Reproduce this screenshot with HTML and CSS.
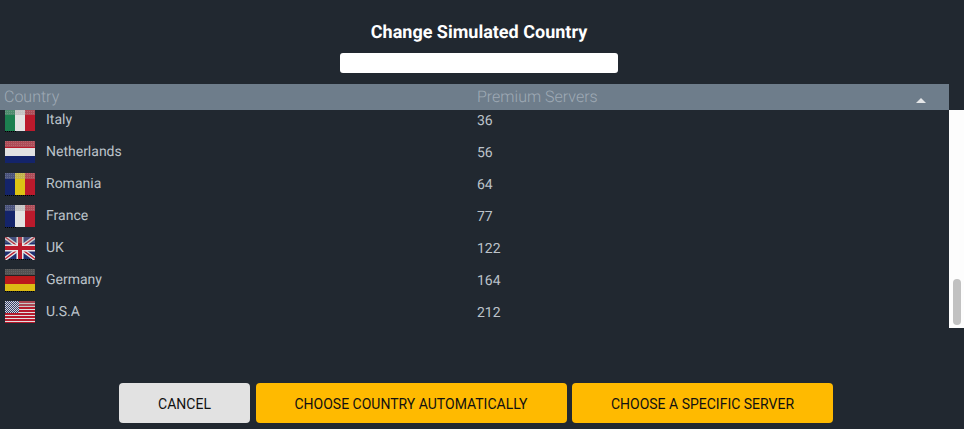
FILE: index.html
```html
<!DOCTYPE html>
<html lang="en">
<head>
<meta charset="utf-8">
<title>Change Simulated Country</title>
<link rel="stylesheet" href="styles.css">
</head>
<body>
<svg class="defs" width="0" height="0" aria-hidden="true">
  <defs>
    <pattern id="dots" width="2" height="2" patternUnits="userSpaceOnUse"><rect width="1" height="1" fill="#fff"/></pattern>
    <pattern id="edge" width="2" height="2" patternUnits="userSpaceOnUse"><rect width="1" height="1" fill="#000"/></pattern>
    <pattern id="canton" width="2" height="2" patternUnits="userSpaceOnUse"><rect width="2" height="2" fill="#33416f"/><rect width="1" height="1" fill="#d8d8d8"/><rect x="1" y="1" width="1" height="1" fill="#d8d8d8"/></pattern>
  </defs>
</svg>
<main class="dialog">
  <h1 class="title">Change Simulated Country</h1>
  <div class="search-row"><input class="search" type="text" aria-label="Search"></div>
  <div class="table-head">
    <span class="col-country">Country</span>
    <span class="col-servers">Premium Servers</span>
    <span class="sort-arrow"></span>
  </div>
  <div class="table-body">
    <div class="rows">
      <div class="row">
        <span class="col-country cell-country">
          <svg class="flag" viewBox="0 0 30 23"><rect y="22" width="12" height="1" fill="url(#edge)"/><rect width="10" height="22" fill="#1c8050"/><rect x="10" width="10" height="22" fill="#e2e2e2"/><rect x="20" width="10" height="22" fill="#bb1a2c"/><rect width="30" height="6" fill="#9a9a9a" opacity=".4"/><rect width="30" height="6" fill="url(#dots)" opacity=".14"/></svg>
          <span class="name">Italy</span>
        </span>
        <span class="col-servers">36</span>
      </div>
      <div class="row">
        <span class="col-country cell-country">
          <svg class="flag" viewBox="0 0 30 23"><rect width="30" height="7" fill="#bb1a2c"/><rect y="7" width="30" height="8" fill="#e2e2e2"/><rect y="15" width="30" height="7" fill="#14246a"/><rect width="30" height="6" fill="#9a9a9a" opacity=".4"/><rect width="30" height="6" fill="url(#dots)" opacity=".14"/></svg>
          <span class="name">Netherlands</span>
        </span>
        <span class="col-servers">56</span>
      </div>
      <div class="row">
        <span class="col-country cell-country">
          <svg class="flag" viewBox="0 0 30 23"><rect y="22" width="30" height="1" fill="url(#edge)"/><rect width="10" height="22" fill="#14246a"/><rect x="10" width="10" height="22" fill="#dcc314"/><rect x="20" width="10" height="22" fill="#bb1a2c"/><rect width="30" height="6" fill="#9a9a9a" opacity=".4"/><rect width="30" height="6" fill="url(#dots)" opacity=".14"/></svg>
          <span class="name">Romania</span>
        </span>
        <span class="col-servers">64</span>
      </div>
      <div class="row">
        <span class="col-country cell-country">
          <svg class="flag" viewBox="0 0 30 23"><rect y="22" width="12" height="1" fill="url(#edge)"/><rect width="10" height="22" fill="#14246a"/><rect x="10" width="10" height="22" fill="#e2e2e2"/><rect x="20" width="10" height="22" fill="#bb1a2c"/><rect width="30" height="6" fill="#9a9a9a" opacity=".4"/><rect width="30" height="6" fill="url(#dots)" opacity=".14"/></svg>
          <span class="name">France</span>
        </span>
        <span class="col-servers">77</span>
      </div>
      <div class="row">
        <span class="col-country cell-country">
          <svg class="flag" viewBox="0 0 30 23"><rect y="22" width="30" height="1" fill="url(#edge)"/><rect width="30" height="22" fill="#1f2f70"/><path d="M0 0L30 22M30 0L0 22" stroke="#e6e6e6" stroke-width="4"/><path d="M0 0L30 22M30 0L0 22" stroke="#bb1a2c" stroke-width="1.4"/><path d="M15 0V22M0 11H30" stroke="#e6e6e6" stroke-width="7"/><path d="M15 0V22M0 11H30" stroke="#bb1a2c" stroke-width="4"/><rect width="30" height="6" fill="#9a9a9a" opacity=".3"/></svg>
          <span class="name">UK</span>
        </span>
        <span class="col-servers">122</span>
      </div>
      <div class="row">
        <span class="col-country cell-country">
          <svg class="flag" viewBox="0 0 30 23"><rect y="22" width="30" height="1" fill="url(#edge)"/><rect width="30" height="7" fill="#222"/><rect y="7" width="30" height="8" fill="#bb1a1c"/><rect y="15" width="30" height="7" fill="#dcbc14"/><rect width="30" height="6" fill="#9a9a9a" opacity=".4"/><rect width="30" height="6" fill="url(#dots)" opacity=".1"/></svg>
          <span class="name">Germany</span>
        </span>
        <span class="col-servers">164</span>
      </div>
      <div class="row">
        <span class="col-country cell-country">
          <svg class="flag" viewBox="0 0 30 23"><rect width="30" height="22" fill="#e0e0e0"/><path d="M0 1H30M0 4H30M0 7H30M0 10H30M0 13H30M0 16H30M0 19H30" stroke="#b51a2c" stroke-width="2"/><rect y="21" width="30" height="1" fill="#b51a2c"/><rect x="14" width="16" height="6" fill="#9a9a9a" opacity=".35"/><rect width="14" height="12" fill="url(#canton)"/></svg>
          <span class="name">U.S.A</span>
        </span>
        <span class="col-servers">212</span>
      </div>
    </div>
    <div class="scrollbar"><div class="thumb"></div></div>
  </div>
  <div class="actions">
    <button class="btn btn-cancel" type="button">CANCEL</button>
    <button class="btn btn-auto" type="button">CHOOSE COUNTRY AUTOMATICALLY</button>
    <button class="btn btn-server" type="button">CHOOSE A SPECIFIC SERVER</button>
  </div>
</main>
</body>
</html>
```
FILE: styles.css
```css
* { box-sizing: border-box; }
html, body { margin: 0; height: 100%; }
body { background: #212830; font-family: Roboto, "Liberation Sans", sans-serif; overflow: hidden; text-rendering: geometricPrecision; }
.defs { position: absolute; }
.dialog { display: flex; flex-direction: column; width: 964px; height: 429px; }
.title { margin: 0; padding-top: 22px; height: 53px; text-align: center; font-size: 18px; line-height: 22px; font-weight: 700; color: #fff; padding-right: 6px; }
.search-row { display: flex; justify-content: center; height: 31px; padding-right: 6px; }
.search { width: 278px; height: 20px; border: 0; border-radius: 3px; background: #fff; padding: 0; }
.table-head { display: flex; width: 949px; height: 26px; background: #6e7d8b; color: #9faab5; font-size: 16px; font-weight: 300; line-height: 26px; position: relative; }
.col-country { width: 477px; flex: none; }
.table-head .col-country { padding-left: 4px; }
.sort-arrow { position: absolute; left: 916px; top: 14px; width: 0; height: 0; border-left: 5px solid transparent; border-right: 5px solid transparent; border-bottom: 5px solid #e4e6e8; }
.table-body { display: flex; height: 218px; }
.rows { width: 949px; height: 218px; overflow: hidden; display: flex; flex-direction: column; justify-content: flex-end; padding-bottom: 1px; }
.row { display: flex; flex: none; height: 32px; align-items: center; font-size: 14px; color: #bcc3ca; }
.cell-country { display: flex; align-items: center; padding-left: 5px; gap: 11px; }
.flag { width: 30px; height: 23px; display: block; flex: none; margin-top: 3px; }
.name { position: relative; top: 1px; }
.row .col-servers { position: relative; top: 2px; }
.scrollbar { width: 15px; height: 218px; background: #fdfdfd; display: flex; flex-direction: column; justify-content: flex-end; padding: 0 3px 3px 4px; }
.thumb { height: 46px; background: #c1c1c1; border-radius: 4px; }
.actions { display: flex; padding-left: 119px; gap: 5px; margin-top: 55px; }
.btn { height: 40px; border: 0; border-radius: 4px; font-family: inherit; font-size: 14px; color: #111; padding: 2px 0 0; }
.btn-cancel { width: 131px; background: #e2e2e2; margin-right: 1px; }
.btn-auto { width: 311px; background: #ffba00; padding-right: 1px; }
.btn-server { width: 261px; background: #ffba00; }
```
